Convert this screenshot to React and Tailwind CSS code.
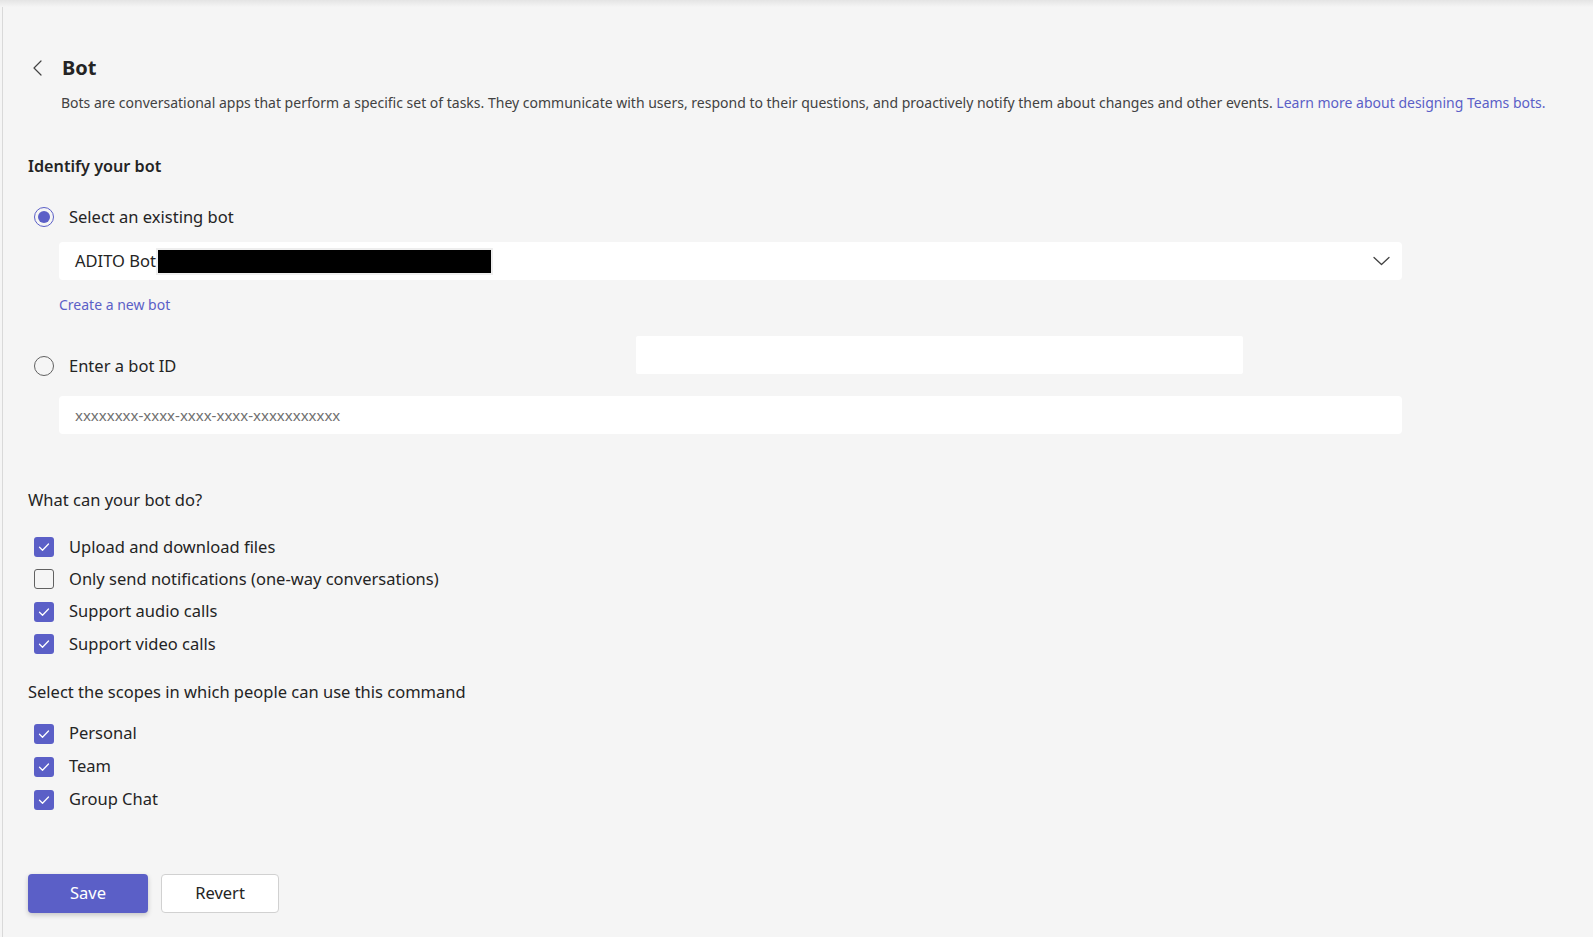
import React, { useState } from "react";

const font = { fontFamily: '"Noto Sans", "Open Sans", sans-serif' };

const Check = ({ checked }) => (
  <span
    className={`flex h-[20px] w-[20px] items-center justify-center rounded-[3px] ${
      checked ? "bg-[#5b5fc7]" : "border border-[#616161] bg-transparent"
    }`}
  >
    {checked && (
      <svg width="14" height="14" viewBox="0 0 14 14" fill="none">
        <path d="M2.5 7.2l3 3L11.5 4" stroke="#fff" strokeWidth="1.3" strokeLinecap="round" strokeLinejoin="round" />
      </svg>
    )}
  </span>
);

const Radio = ({ checked }) => (
  <span
    className={`flex h-[20px] w-[20px] items-center justify-center rounded-full border-[1.5px] ${
      checked ? "border-[#5b5fc7]" : "border-[#616161]"
    }`}
  >
    {checked && <span className="h-[12px] w-[12px] rounded-full bg-[#5b5fc7]"></span>}
  </span>
);

const CheckRow = ({ label, checked, h }) => (
  <div className={`flex items-center ${h}`}>
    <span className="ml-[6px]">
      <Check checked={checked} />
    </span>
    <span className="ml-[15px] text-[16.5px] text-[#242424]">{label}</span>
  </div>
);

export default function App() {
  const [mode] = useState("existing");

  const abilities = [
    { label: "Upload and download files", checked: true },
    { label: "Only send notifications (one-way conversations)", checked: false },
    { label: "Support audio calls", checked: true },
    { label: "Support video calls", checked: true },
  ];

  const scopes = [
    { label: "Personal", checked: true },
    { label: "Team", checked: true },
    { label: "Group Chat", checked: true },
  ];

  return (
    <div className="h-[937px] overflow-hidden bg-[#f5f5f5]" style={font}>
      {/* top shadow */}
      <div className="h-[7px] bg-gradient-to-b from-[#e4e4e4] to-[#f5f5f5]"></div>

      <div className="ml-[2px] h-[930px] border-l-[1.5px] border-[#d9d9d9] pl-[25px]">
        {/* Header */}
        <div className="pt-[47px] flex h-[75px] items-end">
          <div className="flex h-[28px] items-center">
            <svg className="ml-[5px]" width="9" height="16" viewBox="0 0 9 16" fill="none">
              <path d="M8 1L1 8l7 7" stroke="#424242" strokeWidth="1.2" strokeLinecap="round" strokeLinejoin="round" />
            </svg>
            <h1 className="ml-[20px] text-[20px] font-bold text-[#242424]">Bot</h1>
          </div>
        </div>
        <p className="ml-[33px] mt-[11px] text-[14px] leading-[20px] text-[#424242]">
          Bots are conversational apps that perform a specific set of tasks. They communicate with users, respond to their questions, and proactively notify them about changes and other events.{" "}
          <a href="#" className="text-[#5b5fc7]">Learn more about designing Teams bots.</a>
        </p>

        {/* Identify */}
        <h2 className="mt-[42px] text-[16.2px] font-semibold leading-[22px] text-[#242424]">Identify your bot</h2>

        <div className="mt-[28px] flex h-[24px] items-center">
          <span className="ml-[6px]">
            <Radio checked={mode === "existing"} />
          </span>
          <span className="ml-[15px] text-[16.5px] text-[#242424]">Select an existing bot</span>
        </div>

        <div className="ml-[31px] mt-[13px] flex h-[38px] w-[1343px] items-center rounded-[4px] bg-white pl-[16px] pr-[12px]">
          <span className="text-[16.5px] text-[#242424]">ADITO Bot</span>
          <span className="h-[27px] w-[337px] border-2 border-[#eeeeee] bg-black"></span>
          <svg className="ml-auto" width="17" height="10" viewBox="0 0 17 10" fill="none">
            <path d="M1 1.5l7.5 7 7.5-7" stroke="#424242" strokeWidth="1.3" strokeLinecap="round" strokeLinejoin="round" />
          </svg>
        </div>

        <a href="#" className="ml-[31px] mt-[15px] block text-[14px] leading-[20px] text-[#5b5fc7]">
          Create a new bot
        </a>

        <div className="mt-[21px] flex items-start">
          <div className="mt-[18px] flex h-[24px] w-[608px] items-center">
            <span className="ml-[6px]">
              <Radio checked={mode === "id"} />
            </span>
            <span className="ml-[15px] text-[16.5px] text-[#242424]">Enter a bot ID</span>
          </div>
          <div className="h-[38px] w-[607px] rounded-[2px] bg-white"></div>
        </div>

        <div className="ml-[31px] mt-[18px] flex h-[38px] w-[1343px] items-center rounded-[4px] bg-white pl-[16px]">
          <span className="text-[15px] text-[#707070]">xxxxxxxx-xxxx-xxxx-xxxx-xxxxxxxxxxx</span>
        </div>

        {/* Abilities */}
        <h2 className="mt-[55px] text-[16.5px] leading-[22px] text-[#242424]">What can your bot do?</h2>
        <div className="mt-[20px]">
          {abilities.map((a) => (
            <CheckRow key={a.label} label={a.label} checked={a.checked} h="h-[32.3px]" />
          ))}
        </div>

        <h2 className="mt-[21px] text-[16.5px] leading-[22px] text-[#242424]">
          Select the scopes in which people can use this command
        </h2>
        <div className="mt-[14px]">
          {scopes.map((s) => (
            <CheckRow key={s.label} label={s.label} checked={s.checked} h="h-[33px]" />
          ))}
        </div>

        {/* Actions */}
        <div className="mt-[58px] flex gap-[13px]">
          <button className="h-[39px] w-[120px] rounded-[4px] bg-[#5b5fc7] text-[16.5px] text-white shadow-[0_2px_5px_rgba(0,0,0,0.2)]">
            Save
          </button>
          <button className="h-[39px] w-[118px] rounded-[4px] border border-[#d1d1d1] bg-white text-[16.5px] text-[#242424]">
            Revert
          </button>
        </div>
      </div>
    </div>
  );
}
